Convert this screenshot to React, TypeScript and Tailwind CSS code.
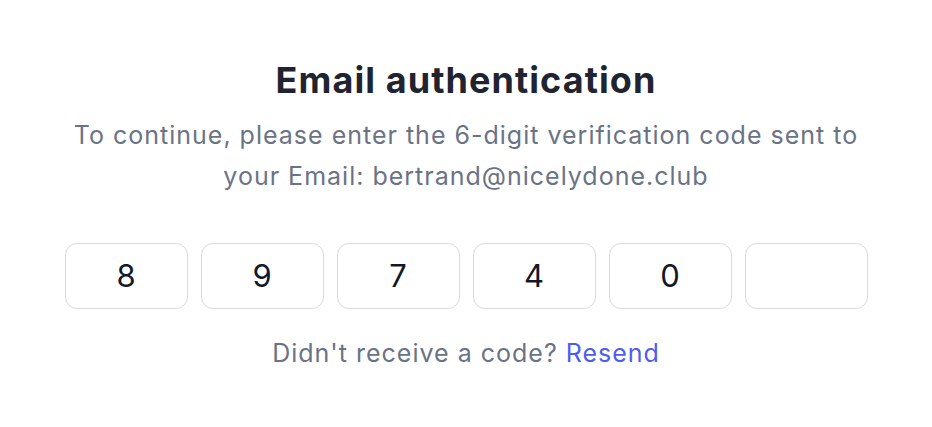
import React from "react";

const digits = ["8", "9", "7", "4", "0", ""];

export default function App() {
  return (
    <div
      className="w-[932px] h-[427px] bg-white flex flex-col items-center pt-[55px]"
      style={{ fontFamily: "Inter, 'Noto Sans', sans-serif" }}
    >
      <h1 className="text-[36px] leading-[50px] font-bold text-[#1f2430] tracking-[0.03em]">
        Email authentication
      </h1>
      <p className="mt-[10px] text-[25px] leading-[41px] text-[#6a7386] text-center w-[900px] tracking-[0.04em]">
        To continue, please enter the 6-digit verification code sent to
        <br />
        your Email: bertrand@nicelydone.club
      </p>
      <div className="mt-[46px] flex gap-[13px]">
        {digits.map((d, i) => (
          <div
            key={i}
            className="w-[123px] h-[66px] rounded-[12px] border-[1.5px] border-[#d8dbe2] flex items-center justify-center text-[31px] text-[#111827]"
          >
            {d}
          </div>
        ))}
      </div>
      <p className="mt-[26px] text-[25px] leading-[36px] text-[#6a7386] tracking-[0.04em]">
        Didn't receive a code? <span className="text-[#4f5cf0]">Resend</span>
      </p>
    </div>
  );
}
